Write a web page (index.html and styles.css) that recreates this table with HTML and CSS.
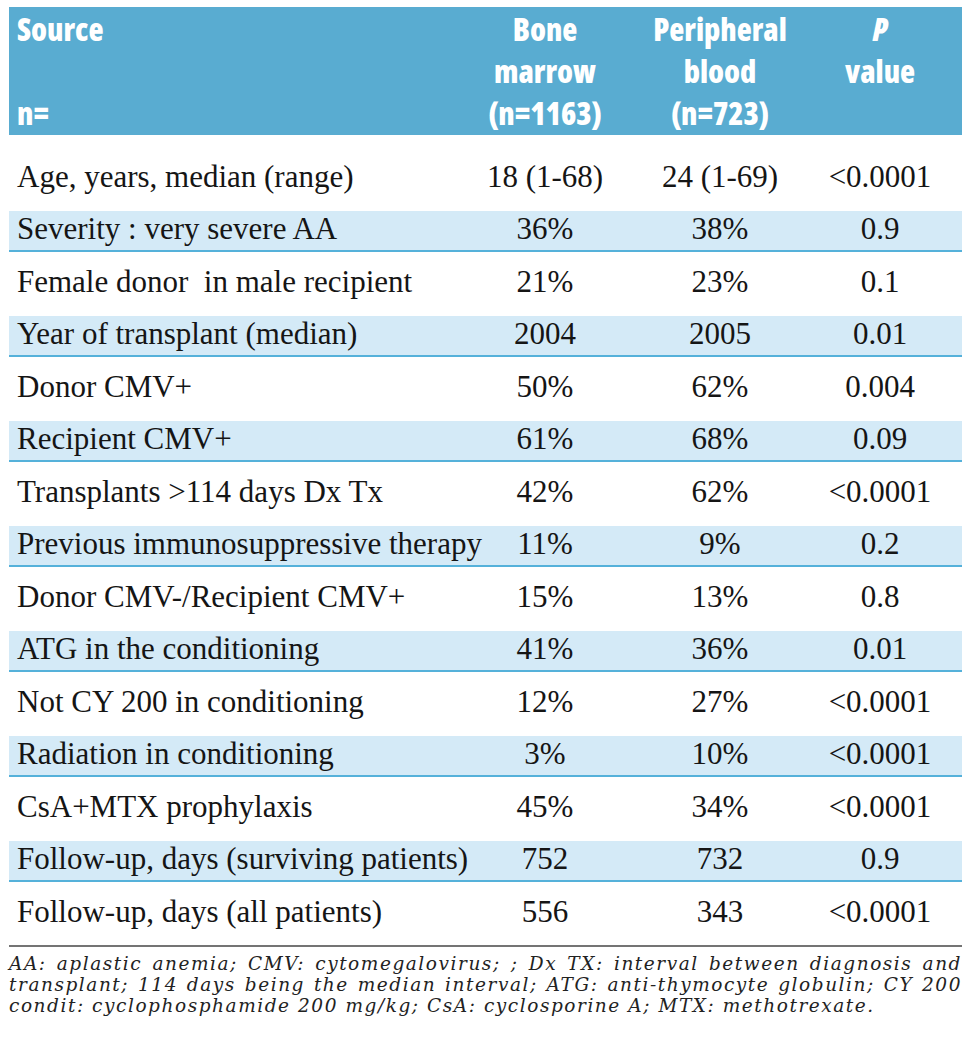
FILE: index.html
```html
<!DOCTYPE html>
<html lang="en">
<head>
<meta charset="utf-8">
<title>Bone marrow vs peripheral blood</title>
<link rel="stylesheet" href="styles.css">
</head>
<body>
<div class="page">
  <div class="head">
    <div class="hcell first"><span>Source</span><span>n=</span></div>
    <div class="hcell">Bone<br>marrow<br>(n=1163)</div>
    <div class="hcell">Peripheral<br>blood<br>(n=723)</div>
    <div class="hcell"><i>P</i><br>value</div>
  </div>
  <div class="rows">
    <div class="row"><div class="label">Age, years, median (range)</div><div class="num">18 (1-68)</div><div class="num">24 (1-69)</div><div class="num">&lt;0.0001</div></div>
    <div class="row alt"><div class="label">Severity : very severe AA</div><div class="num">36%</div><div class="num">38%</div><div class="num">0.9</div></div>
    <div class="row"><div class="label">Female donor &nbsp;in male recipient</div><div class="num">21%</div><div class="num">23%</div><div class="num">0.1</div></div>
    <div class="row alt"><div class="label">Year of transplant (median)</div><div class="num">2004</div><div class="num">2005</div><div class="num">0.01</div></div>
    <div class="row"><div class="label">Donor CMV+</div><div class="num">50%</div><div class="num">62%</div><div class="num">0.004</div></div>
    <div class="row alt"><div class="label">Recipient CMV+</div><div class="num">61%</div><div class="num">68%</div><div class="num">0.09</div></div>
    <div class="row"><div class="label">Transplants &gt;114 days Dx Tx</div><div class="num">42%</div><div class="num">62%</div><div class="num">&lt;0.0001</div></div>
    <div class="row alt"><div class="label">Previous immunosuppressive therapy</div><div class="num">11%</div><div class="num">9%</div><div class="num">0.2</div></div>
    <div class="row"><div class="label">Donor CMV-/Recipient CMV+</div><div class="num">15%</div><div class="num">13%</div><div class="num">0.8</div></div>
    <div class="row alt"><div class="label">ATG in the conditioning</div><div class="num">41%</div><div class="num">36%</div><div class="num">0.01</div></div>
    <div class="row"><div class="label">Not CY 200 in conditioning</div><div class="num">12%</div><div class="num">27%</div><div class="num">&lt;0.0001</div></div>
    <div class="row alt"><div class="label">Radiation in conditioning</div><div class="num">3%</div><div class="num">10%</div><div class="num">&lt;0.0001</div></div>
    <div class="row"><div class="label">CsA+MTX prophylaxis</div><div class="num">45%</div><div class="num">34%</div><div class="num">&lt;0.0001</div></div>
    <div class="row alt"><div class="label">Follow-up, days (surviving patients)</div><div class="num">752</div><div class="num">732</div><div class="num">0.9</div></div>
    <div class="row"><div class="label">Follow-up, days (all patients)</div><div class="num">556</div><div class="num">343</div><div class="num">&lt;0.0001</div></div>
  </div>
  <div class="foot">
    <span class="line just">AA: aplastic anemia; CMV: cytomegalovirus; ; Dx TX: interval between diagnosis and</span>
    <span class="line just">transplant; 114 days being the median interval; ATG: anti-thymocyte globulin; CY 200</span>
    <span class="line">condit: cyclophosphamide 200 mg/kg; CsA: cyclosporine A; MTX: methotrexate.</span>
  </div>
</div>
</body>
</html>
```

FILE: styles.css
```css
html, body {
  margin: 0;
  padding: 0;
  background: #ffffff;
}

.page {
  width: 953px;
  padding: 7px 9px 0 9px;
}

.head,
.row {
  display: grid;
  grid-template-columns: 449px 174px 176px 144px 10px;
}

.head {
  height: 128px;
  background: #59acd1;
  color: #ffffff;
  font-family: "Open Sans", "Liberation Sans", sans-serif;
  font-stretch: 75%;
  font-weight: 800;
  font-size: 31px;
  line-height: 42px;
}

.hcell {
  text-align: center;
  padding-top: 1px;
}

.hcell.first {
  text-align: left;
  padding-left: 8px;
  display: flex;
  flex-direction: column;
  justify-content: space-between;
  padding-bottom: 1px;
}

.rows {
  margin-top: 23.5px;
  display: flex;
  flex-direction: column;
  gap: 11.5px;
}

.row {
  height: 41px;
  box-sizing: border-box;
  font-family: "Liberation Serif", "Times New Roman", serif;
  font-size: 31px;
  line-height: 35px;
  color: #151515;
}

.row.alt {
  background: #d4eaf7;
  border-bottom: 2px solid #55b1da;
}

.label {
  padding-left: 8px;
  white-space: nowrap;
}

.num {
  text-align: center;
  white-space: nowrap;
}

.foot {
  margin-top: 10px;
  border-top: 2px solid #747474;
  padding-top: 6px;
  font-family: "DejaVu Serif", "Liberation Serif", serif;
  font-style: italic;
  font-size: 18.5px;
  letter-spacing: 1.55px;
  line-height: 21px;
  color: #222222;
}

.line {
  display: block;
  white-space: nowrap;
}

.line.just {
  text-align: justify;
  text-align-last: justify;
}
```
